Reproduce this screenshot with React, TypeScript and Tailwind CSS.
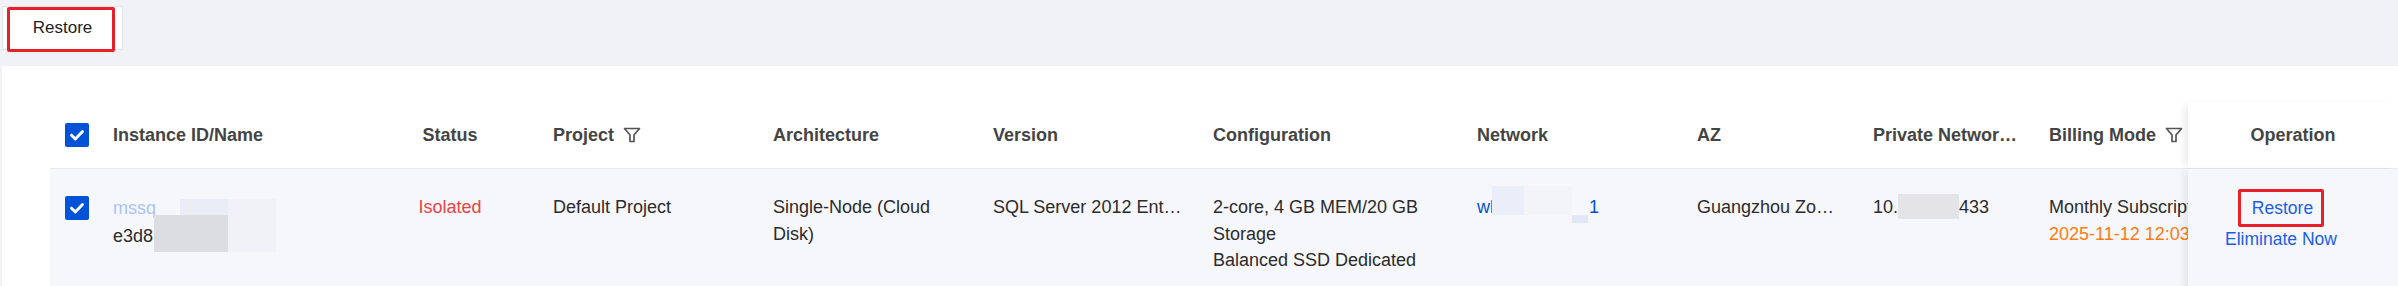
import React from "react";

const font = { fontFamily: '"Liberation Sans", Arial, sans-serif' };

function Check() {
  return (
    <span className="flex h-[24px] w-[24px] items-center justify-center rounded-[2px] bg-[#0052d9]">
      <svg width="18" height="18" viewBox="0 0 18 18" fill="none">
        <path d="M3.5 9.2 L7.3 13 L14.5 5.5" stroke="#fff" strokeWidth="3" strokeLinecap="round" strokeLinejoin="round" />
      </svg>
    </span>
  );
}

function Filter() {
  return (
    <svg width="18" height="16" viewBox="0 0 18 16" fill="none" className="shrink-0">
      <path d="M1.5 1.5 H16.5 L11 8 V14.5 H7 V8 Z" stroke="#555" strokeWidth="1.7" strokeLinejoin="round" />
    </svg>
  );
}

const th = "flex h-full items-center px-[15px] font-bold text-[18px] text-[#444] whitespace-nowrap";
const td = "px-[15px] pt-[25px] text-[18px] leading-[26.5px] text-[#2b2b2b]";

export default function App() {
  return (
    <div className="flex h-[286px] w-[2398px] flex-col overflow-hidden bg-[#f1f2f6]" style={font}>
      <div className="h-[66px] shrink-0 pl-[2px] pt-[6px]">
        <button className="relative h-[44px] w-[121px] border border-[#e3e5ec] bg-white text-[17px] text-[#222]">
          Restore
          <span className="absolute left-[4px] top-[0px] h-[45px] w-[108px] rounded-[2px] border-[3px] border-[#e8202a]" />
        </button>
      </div>

      <div className="ml-[2px] shrink-0 bg-white pl-[48px] pt-[36px]">
        {/* header */}
        <div className="flex h-[67px] border-b border-[#e6e8ef]">
          <div className="flex w-[48px] items-center pl-[15px]">
            <Check />
          </div>
          <div className={`${th} w-[264px]`}>Instance ID/Name</div>
          <div className={`${th} w-[176px] justify-center`}>Status</div>
          <div className={`${th} w-[220px] gap-[9px]`}>
            Project <Filter />
          </div>
          <div className={`${th} w-[220px]`}>Architecture</div>
          <div className={`${th} w-[220px]`}>Version</div>
          <div className={`${th} w-[264px]`}>Configuration</div>
          <div className={`${th} w-[220px]`}>Network</div>
          <div className={`${th} w-[176px]`}>AZ</div>
          <div className={`${th} w-[176px]`}>
            <span className="truncate">Private Network Address</span>
          </div>
          <div className={`${th} w-[154px] gap-[9px] overflow-hidden pr-0`}>
            Billing Mode <Filter />
          </div>
          <div className={`${th} flex-1 justify-center bg-white shadow-[-6px_0_8px_-3px_rgba(0,0,0,0.09)]`}>
            Operation
          </div>
        </div>

        {/* row */}
        <div className="flex h-[140px] bg-[#f6f7fb]">
          <div className="w-[48px] pl-[15px] pt-[27px]">
            <Check />
          </div>
          <div className={`${td} relative w-[264px] leading-[28px]`}>
            <div className="text-[#a9c4f5]">mssq</div>
            <div>e3d8</div>
            <span className="absolute left-[82px] top-[30px] h-[16px] w-[48px] bg-[#e9edf6]" />
            <span className="absolute left-[56px] top-[46px] h-[37px] w-[74px] bg-[#dcdde1]" />
            <span className="absolute left-[130px] top-[30px] h-[53px] w-[48px] bg-[#f1f2f8]" />
          </div>
          <div className={`${td} w-[176px] text-center text-[#e54545]`}>Isolated</div>
          <div className={`${td} w-[220px]`}>Default Project</div>
          <div className={`${td} w-[220px]`}>Single-Node (Cloud Disk)</div>
          <div className={`${td} w-[220px]`}>
            <div className="truncate">SQL Server 2012 Enterprise</div>
          </div>
          <div className={`${td} w-[264px]`}>
            <div>2-core, 4 GB MEM/20 GB Storage</div>
            <div>Balanced SSD Dedicated</div>
          </div>
          <div className={`${td} relative w-[220px] text-[#0052d9]`}>
            wl<span className="inline-block w-[95px]" />1
            <span className="absolute left-[30px] top-[17px] h-[29px] w-[32px] bg-[#eaeef8]" />
            <span className="absolute left-[62px] top-[17px] h-[29px] w-[48px] bg-[#f2f4fa]" />
            <span className="absolute left-[110px] top-[46px] h-[8px] w-[16px] bg-[#e2e7f4]" />
          </div>
          <div className={`${td} w-[176px]`}>
            <div className="truncate">Guangzhou Zone 6</div>
          </div>
          <div className={`${td} w-[176px] whitespace-nowrap`}>
            10.<span className="inline-block h-[25px] w-[61px] bg-[#e4e4e7] align-[-6px]" />433
          </div>
          <div className={`${td} w-[154px] overflow-hidden whitespace-nowrap pr-0`}>
            <div>Monthly Subscription</div>
            <div className="text-[#ff7a12]">2025-11-12 12:03:41</div>
          </div>
          <div className="flex flex-1 flex-col items-center bg-[#f6f7fb] pr-[24px] pt-[20px] text-[17.5px] text-[#1a5ee6] shadow-[-6px_0_8px_-3px_rgba(0,0,0,0.09)]">
            <a className="rounded-[2px] border-[3px] border-[#e8202a] pl-[11px] pr-[8px] py-[4px] leading-[24px]">Restore</a>
            <a className="leading-[24px]">Eliminate Now</a>
          </div>
        </div>
      </div>
    </div>
  );
}
